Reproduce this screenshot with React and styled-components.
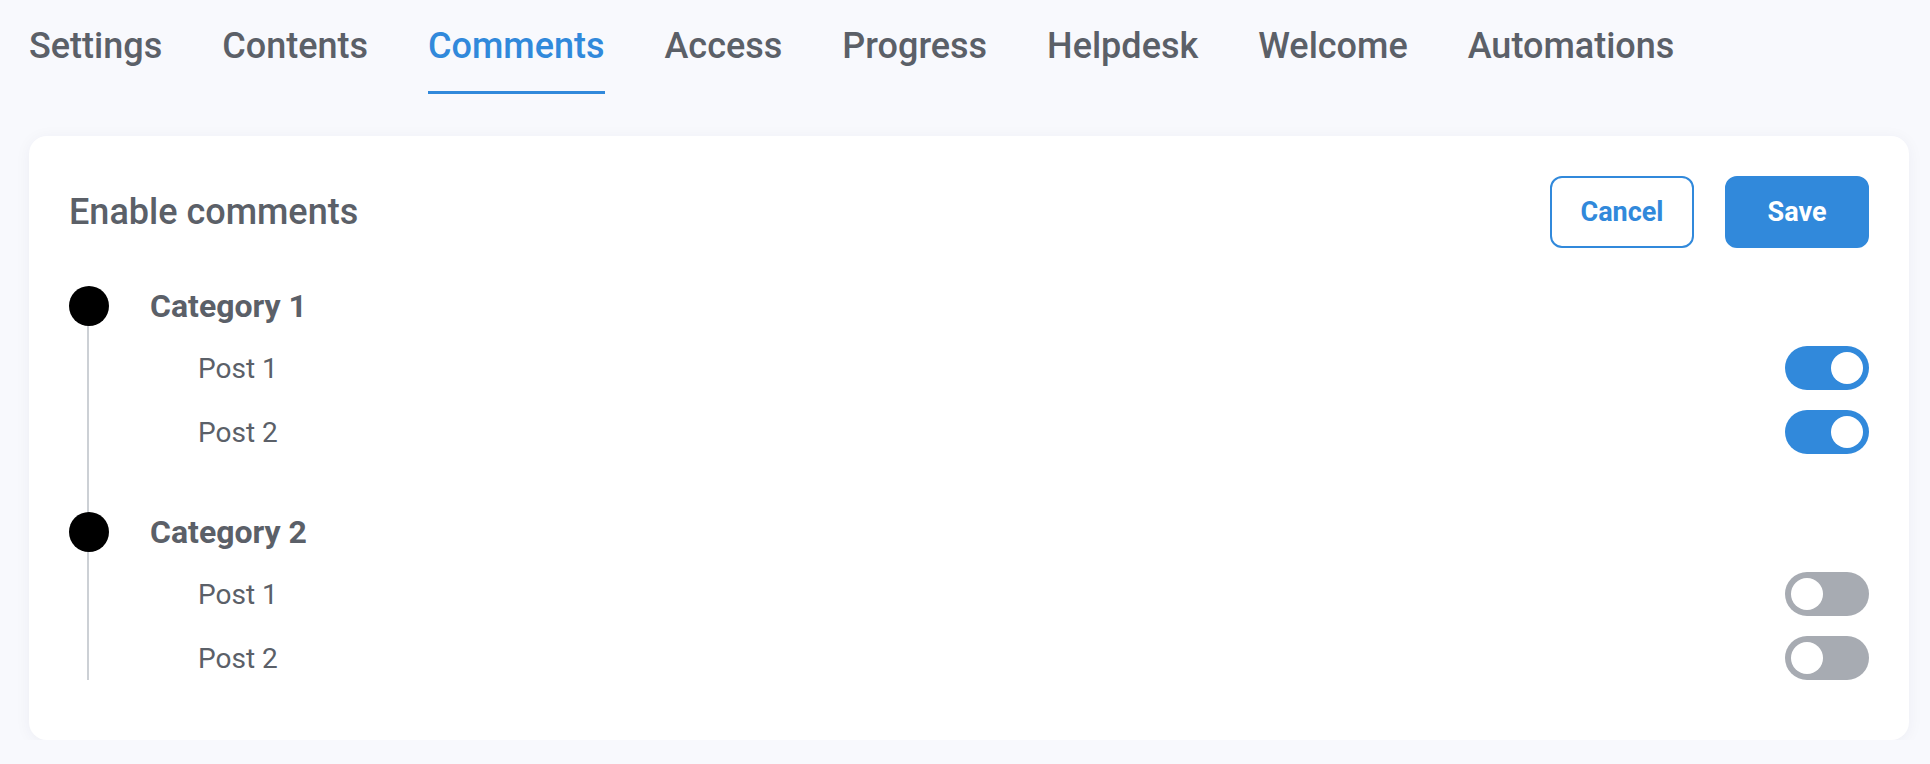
import React, { useState } from "react"
import styled, { createGlobalStyle } from "styled-components"

const GlobalStyle = createGlobalStyle`
  html, body {
    margin: 0;
    padding: 0;
    background: #f8f9fd;
    font-family: Roboto, "Liberation Sans", Arial, sans-serif;
  }
`

const Page = styled.div`
  padding: 0 21px 0 29px;
`

const TabBar = styled.nav`
  display: flex;
  gap: 60px;
  height: 136px;
  align-items: flex-start;
`

const Tab = styled.button`
  box-sizing: border-box;
  border: none;
  background: none;
  padding: 25px 0 0;
  height: 94px;
  font-family: inherit;
  font-size: 36px;
  font-weight: 500;
  color: ${p => (p.active ? "#3189db" : "#5b6068")};
  border-bottom: 3px solid ${p => (p.active ? "#3189db" : "transparent")};
  display: flex;
  align-items: flex-start;
  cursor: pointer;
`

const Card = styled.section`
  background: #fff;
  border-radius: 18px;
  box-shadow: 0 2px 16px rgba(30, 40, 80, 0.05);
  padding: 40px 40px 60px 40px;
`

const Header = styled.div`
  display: flex;
  align-items: center;
  justify-content: space-between;
  height: 72px;
`

const Title = styled.h2`
  margin: 0;
  font-size: 36px;
  font-weight: 500;
  color: #5b6068;
`

const Actions = styled.div`
  display: flex;
  gap: 31px;
`

const Button = styled.button`
  box-sizing: border-box;
  width: 144px;
  height: 72px;
  border-radius: 12px;
  border: 2px solid #3189db;
  background: ${p => (p.primary ? "#3189db" : "#fff")};
  color: ${p => (p.primary ? "#fff" : "#3189db")};
  font-family: inherit;
  font-size: 27px;
  font-weight: 700;
  cursor: pointer;
`

const Timeline = styled.div`
  position: relative;
  margin-top: 38px;
  display: flex;
  flex-direction: column;
  gap: 58px;

  &::before {
    content: "";
    position: absolute;
    left: 18px;
    top: 20px;
    bottom: 0;
    width: 2px;
    background: #ccd0d5;
  }
`

const Group = styled.div`
  display: flex;
  flex-direction: column;
  gap: 20px;
`

const CategoryRow = styled.div`
  display: flex;
  align-items: center;
  gap: 41px;
  height: 40px;
`

const Dot = styled.span`
  position: relative;
  width: 40px;
  height: 40px;
  border-radius: 50%;
  background: #000;
  flex-shrink: 0;
`

const CategoryName = styled.span`
  font-size: 32px;
  font-weight: 700;
  color: #5b6068;
`

const PostRow = styled.div`
  display: flex;
  align-items: center;
  justify-content: space-between;
  height: 44px;
  padding-left: 129px;
`

const PostName = styled.span`
  font-size: 28px;
  color: #5b6068;
`

const Toggle = styled.button`
  position: relative;
  width: 84px;
  height: 44px;
  border: none;
  border-radius: 22px;
  padding: 0;
  background: ${p => (p.on ? "#3189db" : "#a7abb2")};
  cursor: pointer;

  &::after {
    content: "";
    position: absolute;
    top: 6px;
    left: ${p => (p.on ? "46px" : "6px")};
    width: 32px;
    height: 32px;
    border-radius: 50%;
    background: #fff;
  }
`

const tabs = ["Settings", "Contents", "Comments", "Access", "Progress", "Helpdesk", "Welcome", "Automations"]

const initial = [
  { name: "Category 1", posts: [{ name: "Post 1", on: true }, { name: "Post 2", on: true }] },
  { name: "Category 2", posts: [{ name: "Post 1", on: false }, { name: "Post 2", on: false }] },
]

export default function App() {
  const [cats, setCats] = useState(initial)

  const flip = (ci, pi) => {
    setCats(cats.map((c, i) => i !== ci ? c : {
      ...c,
      posts: c.posts.map((p, j) => (j === pi ? { ...p, on: !p.on } : p)),
    }))
  }

  return (
    <Page>
      <GlobalStyle />
      <TabBar>
        {tabs.map(t => (
          <Tab key={t} active={t === "Comments"}>{t}</Tab>
        ))}
      </TabBar>
      <Card>
        <Header>
          <Title>Enable comments</Title>
          <Actions>
            <Button>Cancel</Button>
            <Button primary>Save</Button>
          </Actions>
        </Header>
        <Timeline>
          {cats.map((c, ci) => (
            <Group key={c.name}>
              <CategoryRow>
                <Dot />
                <CategoryName>{c.name}</CategoryName>
              </CategoryRow>
              {c.posts.map((p, pi) => (
                <PostRow key={p.name}>
                  <PostName>{p.name}</PostName>
                  <Toggle on={p.on} onClick={() => flip(ci, pi)} />
                </PostRow>
              ))}
            </Group>
          ))}
        </Timeline>
      </Card>
    </Page>
  )
}
